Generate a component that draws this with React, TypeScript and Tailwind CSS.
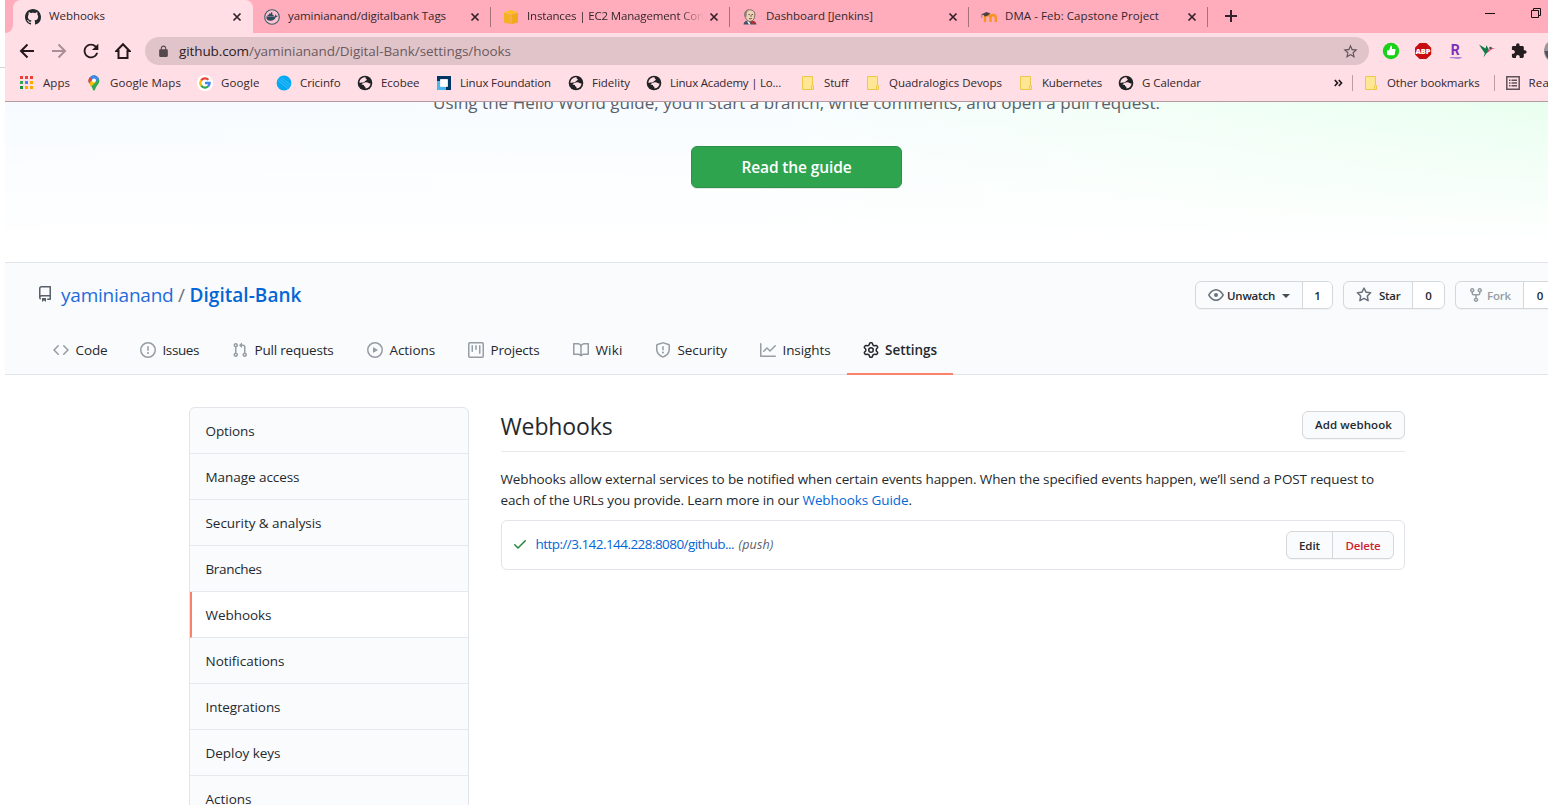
import { useLayoutEffect, useRef, useState, type ReactNode } from "react";

/** Text whose letter spacing is adjusted so that it fills `w` pixels. */
function T({ w, className = "", children }: { w: number; className?: string; children: string }) {
  const ref = useRef<HTMLSpanElement>(null);
  const [ls, setLs] = useState(0);
  useLayoutEffect(() => {
    if (ref.current) {
      const natural = ref.current.getBoundingClientRect().width;
      setLs((w - natural) / children.length);
    }
  }, []);
  return (
    <span ref={ref} className={"inline-block whitespace-pre " + className} style={{ letterSpacing: ls }}>
      {children}
    </span>
  );
}

function Svg({ d, s = 16, vb = "0 0 16 16", className = "" }: { d: string; s?: number; vb?: string; className?: string }) {
  return (
    <svg width={s} height={s} viewBox={vb} fill="currentColor" fillRule="evenodd" className={"shrink-0 " + className}>
      <path d={d} />
    </svg>
  );
}

const P = {
  repo: "M2 2.5A2.5 2.5 0 014.5 0h8.75a.75.75 0 01.75.75v12.5a.75.75 0 01-.75.75h-2.5a.75.75 0 110-1.5h1.75v-2h-8a1 1 0 00-.714 1.7.75.75 0 01-1.072 1.05A2.495 2.495 0 012 11.5v-9zm10.5-1V9h-8c-.356 0-.694.074-1 .208V2.5a1 1 0 011-1h8zM5 12.25v3.25a.25.25 0 00.4.2l1.45-1.087a.25.25 0 01.3 0L8.6 15.7a.25.25 0 00.4-.2v-3.25a.25.25 0 00-.25-.25h-3.5a.25.25 0 00-.25.25z",
  code: "M4.72 3.22a.75.75 0 011.06 1.06L2.06 8l3.72 3.72a.75.75 0 11-1.06 1.06L.47 8.53a.75.75 0 010-1.06l4.25-4.25zm6.56 0a.75.75 0 10-1.06 1.06L13.94 8l-3.72 3.72a.75.75 0 101.06 1.06l4.25-4.25a.75.75 0 000-1.06l-4.25-4.25z",
  issue: "M8 1.5a6.5 6.5 0 100 13 6.5 6.5 0 000-13zM0 8a8 8 0 1116 0A8 8 0 010 8zm9 3a1 1 0 11-2 0 1 1 0 012 0zm-.25-6.25a.75.75 0 00-1.5 0v3.5a.75.75 0 001.5 0v-3.5z",
  pull: "M7.177 3.073L9.573.677A.25.25 0 0110 .854v4.792a.25.25 0 01-.427.177L7.177 3.427a.25.25 0 010-.354zM3.75 2.5a.75.75 0 100 1.5.75.75 0 000-1.5zm-2.25.75a2.25 2.25 0 113 2.122v5.256a2.251 2.251 0 11-1.5 0V5.372A2.25 2.25 0 011.5 3.25zM11 2.5h-1V4h1a1 1 0 011 1v5.628a2.251 2.251 0 101.5 0V5A2.5 2.5 0 0011 2.5zm1 10.25a.75.75 0 111.5 0 .75.75 0 01-1.5 0zM3.75 12a.75.75 0 100 1.5.75.75 0 000-1.5z",
  play: "M1.5 8a6.5 6.5 0 1113 0 6.5 6.5 0 01-13 0zM8 0a8 8 0 100 16A8 8 0 008 0zM6.379 5.227A.25.25 0 006 5.442v5.117a.25.25 0 00.379.214l4.264-2.559a.25.25 0 000-.428L6.379 5.227z",
  project: "M1.75 0A1.75 1.75 0 000 1.75v12.5C0 15.216.784 16 1.75 16h12.5A1.75 1.75 0 0016 14.25V1.75A1.75 1.75 0 0014.25 0H1.75zM1.5 1.75a.25.25 0 01.25-.25h12.5a.25.25 0 01.25.25v12.5a.25.25 0 01-.25.25H1.75a.25.25 0 01-.25-.25V1.75zM11.75 3a.75.75 0 00-.75.75v7.5a.75.75 0 001.5 0v-7.5a.75.75 0 00-.75-.75zm-8.25.75a.75.75 0 011.5 0v5.5a.75.75 0 01-1.5 0v-5.5zM8 3a.75.75 0 00-.75.75v3.5a.75.75 0 001.5 0v-3.5A.75.75 0 008 3z",
  book: "M0 1.75A.75.75 0 01.75 1h4.253c1.227 0 2.317.59 3 1.501A3.744 3.744 0 0111.006 1h4.245a.75.75 0 01.75.75v10.5a.75.75 0 01-.75.75h-4.507a2.25 2.25 0 00-1.591.659l-.622.621a.75.75 0 01-1.06 0l-.622-.621A2.25 2.25 0 005.258 13H.75a.75.75 0 01-.75-.75V1.75zm8.755 3a2.25 2.25 0 012.25-2.25H14.5v9h-3.757c-.71 0-1.4.201-1.992.572l.004-7.322zm-1.504 7.324l.004-5.073-.002-2.253A2.25 2.25 0 005.003 2.5H1.5v9h3.757a3.75 3.75 0 011.994.574z",
  shield: "M7.467.133a1.75 1.75 0 011.066 0l5.25 1.68A1.75 1.75 0 0115 3.48V7c0 1.566-.32 3.182-1.303 4.682-.983 1.498-2.585 2.813-5.032 3.855a1.7 1.7 0 01-1.33 0c-2.447-1.042-4.049-2.357-5.032-3.855C1.32 10.182 1 8.566 1 7V3.48a1.75 1.75 0 011.217-1.667l5.25-1.68zm.61 1.429a.25.25 0 00-.153 0l-5.25 1.68a.25.25 0 00-.174.238V7c0 1.358.275 2.666 1.057 3.86.784 1.194 2.121 2.34 4.366 3.297a.2.2 0 00.154 0c2.245-.956 3.582-2.104 4.366-3.298C13.225 9.666 13.5 8.36 13.5 7V3.48a.25.25 0 00-.174-.237l-5.25-1.68zM9 10.5a1 1 0 11-2 0 1 1 0 012 0zm-.25-5.75a.75.75 0 10-1.5 0v3a.75.75 0 001.5 0v-3z",
  graph: "M1.5 1.75a.75.75 0 00-1.5 0v12.5c0 .414.336.75.75.75h14.5a.75.75 0 000-1.5H1.5V1.75zm14.28 2.53a.75.75 0 00-1.06-1.06L10 7.94 7.53 5.47a.75.75 0 00-1.06 0L3.22 8.72a.75.75 0 001.06 1.06L7 7.06l2.47 2.47a.75.75 0 001.06 0l5.25-5.25z",
  gear: "M7.429 1.525a6.593 6.593 0 011.142 0c.036.003.108.036.137.146l.289 1.105c.147.56.55.967.997 1.189.174.086.341.183.501.29.417.278.97.423 1.53.27l1.102-.303c.11-.03.175.016.195.046.219.31.41.641.573.989.014.031.022.11-.059.19l-.815.806c-.411.406-.562.957-.53 1.456a4.588 4.588 0 010 .582c-.032.499.119 1.05.53 1.456l.815.806c.08.08.073.159.059.19a6.494 6.494 0 01-.573.99c-.02.029-.086.074-.195.045l-1.103-.303c-.559-.153-1.112-.008-1.529.27-.16.107-.327.204-.5.29-.449.222-.851.628-.998 1.189l-.289 1.105c-.029.11-.101.143-.137.146a6.613 6.613 0 01-1.142 0c-.036-.003-.108-.037-.137-.146l-.289-1.105c-.147-.56-.55-.967-.997-1.189a4.502 4.502 0 01-.501-.29c-.417-.278-.97-.423-1.53-.27l-1.102.303c-.11.03-.175-.016-.195-.046a6.492 6.492 0 01-.573-.989c-.014-.031-.022-.11.059-.19l.815-.806c.411-.406.562-.957.53-1.456a4.587 4.587 0 010-.582c.032-.499-.119-1.05-.53-1.456l-.815-.806c-.08-.08-.073-.159-.059-.19a6.44 6.44 0 01.573-.99c.02-.029.086-.075.195-.045l1.103.303c.559.153 1.112.008 1.529-.27.16-.107.327-.204.5-.29.449-.222.851-.628.998-1.189l.289-1.105c.029-.11.101-.143.137-.146zM8 0c-.236 0-.47.01-.701.03-.743.065-1.29.615-1.458 1.261l-.29 1.106c-.017.066-.078.158-.211.224a5.994 5.994 0 00-.668.386c-.123.082-.233.09-.3.071L3.27 2.776c-.644-.177-1.392.02-1.82.63a7.977 7.977 0 00-.704 1.217c-.315.675-.111 1.422.363 1.891l.815.806c.05.048.098.147.088.294a6.084 6.084 0 000 .772c.01.147-.038.246-.088.294l-.815.806c-.474.469-.678 1.216-.363 1.891.2.428.436.835.704 1.218.428.609 1.176.806 1.82.63l1.103-.303c.066-.019.176-.011.299.071.213.143.436.272.668.386.133.066.194.158.212.224l.289 1.106c.169.646.715 1.196 1.458 1.26a8.094 8.094 0 001.402 0c.743-.064 1.29-.614 1.458-1.26l.29-1.106c.017-.066.078-.158.211-.224a5.98 5.98 0 00.668-.386c.123-.082.233-.09.3-.071l1.102.302c.644.177 1.392-.02 1.82-.63.268-.382.505-.789.704-1.217.315-.675.111-1.422-.364-1.891l-.814-.806c-.05-.048-.098-.147-.088-.294a6.1 6.1 0 000-.772c-.01-.147.039-.246.088-.294l.814-.806c.475-.469.679-1.216.364-1.891a7.992 7.992 0 00-.704-1.218c-.428-.609-1.176-.806-1.82-.63l-1.103.303c-.066.019-.176.011-.299-.071a5.991 5.991 0 00-.668-.386c-.133-.066-.194-.158-.212-.224L10.16 1.29C9.99.645 9.444.095 8.701.031A8.094 8.094 0 008 0zm1.5 8a1.5 1.5 0 11-3 0 1.5 1.5 0 013 0zM11 8a3 3 0 11-6 0 3 3 0 016 0z",
  eye: "M1.679 7.932c.412-.621 1.242-1.75 2.366-2.717C5.175 4.242 6.527 3.5 8 3.5c1.473 0 2.824.742 3.955 1.715 1.124.967 1.954 2.096 2.366 2.717a.119.119 0 010 .136c-.412.621-1.242 1.75-2.366 2.717C10.825 11.758 9.473 12.5 8 12.5c-1.473 0-2.824-.742-3.955-1.715C2.92 9.818 2.09 8.69 1.679 8.068a.119.119 0 010-.136zM8 2c-1.981 0-3.67.992-4.933 2.078C1.797 5.169.88 6.423.43 7.1a1.619 1.619 0 000 1.798c.45.678 1.367 1.932 2.637 3.024C4.329 13.008 6.019 14 8 14c1.981 0 3.67-.992 4.933-2.078 1.27-1.091 2.187-2.345 2.637-3.023a1.619 1.619 0 000-1.798c-.45-.678-1.367-1.932-2.637-3.023C11.671 2.992 9.981 2 8 2zm0 8a2 2 0 100-4 2 2 0 000 4z",
  star: "M8 .25a.75.75 0 01.673.418l1.882 3.815 4.21.612a.75.75 0 01.416 1.279l-3.046 2.97.719 4.192a.75.75 0 01-1.088.791L8 12.347l-3.766 1.98a.75.75 0 01-1.088-.79l.72-4.194L.818 6.374a.75.75 0 01.416-1.28l4.21-.611L7.327.668A.75.75 0 018 .25zm0 2.445L6.615 5.5a.75.75 0 01-.564.41l-3.097.45 2.24 2.184a.75.75 0 01.216.664l-.528 3.084 2.769-1.456a.75.75 0 01.698 0l2.77 1.456-.53-3.084a.75.75 0 01.216-.664l2.24-2.183-3.096-.45a.75.75 0 01-.564-.41L8 2.694v.001z",
  fork: "M5 3.25a.75.75 0 11-1.5 0 .75.75 0 011.5 0zm0 2.122a2.25 2.25 0 10-1.5 0v.878A2.25 2.25 0 005.75 8.5h1.5v2.128a2.251 2.251 0 101.5 0V8.5h1.5a2.25 2.25 0 002.25-2.25v-.878a2.25 2.25 0 10-1.5 0v.878a.75.75 0 01-.75.75h-4.5A.75.75 0 015 6.25v-.878zm3.75 7.378a.75.75 0 11-1.5 0 .75.75 0 011.5 0zm3-8.75a.75.75 0 100-1.5.75.75 0 000 1.5z",
  check: "M13.78 4.22a.75.75 0 010 1.06l-7.25 7.25a.75.75 0 01-1.06 0L2.22 9.28a.75.75 0 011.06-1.06L6 10.94l6.72-6.72a.75.75 0 011.06 0z",
  github: "M8 0C3.58 0 0 3.58 0 8c0 3.54 2.29 6.53 5.47 7.59.4.07.55-.17.55-.38 0-.19-.01-.82-.01-1.49-2.01.37-2.53-.49-2.69-.94-.09-.23-.48-.94-.82-1.13-.28-.15-.68-.52-.01-.53.63-.01 1.08.58 1.23.82.72 1.21 1.87.87 2.33.66.07-.52.28-.87.51-1.07-1.78-.2-3.64-.89-3.64-3.95 0-.87.31-1.59.82-2.15-.08-.2-.36-1.02.08-2.12 0 0 .67-.21 2.2.82.64-.18 1.32-.27 2-.27.68 0 1.36.09 2 .27 1.53-1.04 2.2-.82 2.2-.82.44 1.1.16 1.92.08 2.12.51.56.82 1.27.82 2.15 0 3.07-1.87 3.75-3.65 3.95.29.25.54.73.54 1.48 0 1.07-.01 1.93-.01 2.2 0 .21.15.46.55.38A8.013 8.013 0 0016 8c0-4.42-3.58-8-8-8z",
  reload: "M17.65 6.35A7.958 7.958 0 0012 4c-4.42 0-7.99 3.58-7.99 8s3.57 8 7.99 8c3.73 0 6.84-2.55 7.73-6h-2.08A5.99 5.99 0 0112 18c-3.31 0-6-2.69-6-6s2.69-6 6-6c1.66 0 3.14.69 4.22 1.78L13 11h7V4l-2.35 2.35z",
  puzzle: "M20.5 11H19V7c0-1.1-.9-2-2-2h-4V3.5a2.5 2.5 0 00-5 0V5H4c-1.1 0-1.99.9-1.99 2v3.8H3.5c1.49 0 2.7 1.21 2.7 2.7s-1.21 2.7-2.7 2.7H2V20c0 1.1.9 2 2 2h3.8v-1.5c0-1.49 1.21-2.7 2.7-2.7s2.7 1.21 2.7 2.7V22H17c1.1 0 2-.9 2-2v-4h1.5a2.5 2.5 0 000-5z",
  lock: "M18 8h-1V6c0-2.76-2.24-5-5-5S7 3.24 7 6v2H6c-1.1 0-2 .9-2 2v10c0 1.1.9 2 2 2h12c1.1 0 2-.9 2-2V10c0-1.1-.9-2-2-2zM9 6c0-1.66 1.34-3 3-3s3 1.34 3 3v2H9V6z",
  starLine: "M22 9.24l-7.19-.62L12 2 9.19 8.63 2 9.24l5.46 4.73L5.82 21 12 17.27 18.18 21l-1.63-7.03L22 9.24zM12 15.4l-3.76 2.27 1-4.28-3.32-2.88 4.38-.38L12 6.1l1.71 4.04 4.38.38-3.32 2.88 1 4.28L12 15.4z",
};

const Docker = () => (
  <svg width="16" height="16" viewBox="0 0 16 16" className="shrink-0">
    <circle cx="8" cy="8" r="7.3" fill="#ffc3cd" stroke="#3c5a70" strokeWidth="1.1" />
    <path d="M2.3 7.4h8.6c.5-.8.4-1.6.1-2.2.9.3 1.1.9 1.2 1.5.6-.1 1.2 0 1.6.3-.4.8-1.1 1.1-1.9 1-1 2.600-2.800 3.800-5.500 3.800-2.600 0-4.200-1.500-4.100-4.400z" fill="#2c4a60" />
    <path d="M3.600 5.800h6v1.500h-6zM5.100 4.500h3.200v1.200H5.100zM7 3.200h1.300v1.200H7z" fill="#2c4a60" />
  </svg>
);
const Cube = () => (
  <svg width="16" height="16" viewBox="0 0 16 16" className="shrink-0">
    <path d="M1 3.200 8 1l7 2.200L8 5z" fill="#fbc01e" />
    <path d="M1 3.800l6.700 1.500V15.200L1 13.500z" fill="#f5b120" />
    <path d="M15 3.800 8.300 5.300V15.200L15 13.500z" fill="#f2a81c" />
  </svg>
);
const Jenkins = () => (
  <svg width="16" height="16" viewBox="0 0 16 16" className="shrink-0">
    <path d="M1.500 15.500c0-2.500 2-3.500 4-4l5 .2c2 .3 3.500 1.300 4 3.800z" fill="#40525f" />
    <path d="M2.700 6C2.500 2.500 4.500.8 7.600.8c3.400 0 5.500 1.800 5.200 5.400-.1 3.400-1.900 6-4.300 6.200C5.800 12.600 3.200 10 2.700 6z" fill="#eed0b4" stroke="#5c514b" strokeWidth=".8" />
    <path d="M2.600 6.500C2 3 4.500.7 7 .8 5 2 4.500 4 4.600 7l-.8 2z" fill="#8a8178" />
    <path d="M6.400 5.500h1.400M9.600 5.500H11M7 9.400c1 .6 2.200.5 3-.2M9 6v1.800" stroke="#3c3532" strokeWidth=".8" fill="none" />
    <path d="M8 13.300 11 12v3zm6 0L11 12.500v2.200z" fill="#d3262f" />
    <path d="M5 12.500l2 3h1.500L7 12.500z" fill="#fff" />
  </svg>
);
const Moodle = () => (
  <svg width="16" height="16" viewBox="0 0 16 16" className="shrink-0">
    <path d="M4 13V9c0-2 1-3 2.700-3S9.500 7 9.500 9v4M9.500 9c0-2 1-3 2.600-3s2.700 1 2.700 3v4" fill="none" stroke="#f7931e" strokeWidth="2.300" />
    <path d="M0 5.600 5.500 3 9.500 4.600 6 7 3.500 7.500 3 6.200z" fill="#4a4341" />
    <path d="M.8 5.500v3.500" stroke="#8a6a5c" strokeWidth=".7" />
  </svg>
);
const Close = () => (
  <svg width="16" height="16" viewBox="0 0 16 16" className="shrink-0">
    <path d="M4.500 4.500l7 7M11.500 4.500l-7 7" stroke="#33222a" strokeWidth="1.700" />
  </svg>
);

const Apps = () => (
  <svg width="16" height="16" viewBox="0 0 16 16" className="shrink-0">
    {["#ea4335", "#ea4335", "#ea4335", "#34a853", "#4285f4", "#f9ab00", "#1e8e3e", "#f9ab00", "#f9ab00"].map((c, i) => (
      <rect key={i} x={1 + (i % 3) * 5} y={1 + Math.floor(i / 3) * 5} width="3" height="3" fill={c} />
    ))}
  </svg>
);
const Maps = () => (
  <svg width="16" height="16" viewBox="0 0 16 16" className="shrink-0">
    <path d="M8 .3A5.400 5.400 0 0 0 2.600 5.700c0 3.300 3 4.600 4.200 8.600.3 1 .7 1.400 1.200 1.400s.9-.4 1.200-1.400c1.200-4 4.200-5.300 4.200-8.600A5.400 5.400 0 0 0 8 .3z" fill="#34a853" />
    <path d="M3.200 8.300 10 .7A5.400 5.400 0 0 0 2.600 5.700c0 1 .2 1.800.6 2.600z" fill="#4285f4" />
    <path d="M3.800 2.300 6.200 4.400 4 7.600l-.7.800A5 5 0 0 1 3.800 2.300z" fill="#ea4335" />
    <path d="M3.200 8.300 6.500 4.600l3 2.800-4.300 4C4.400 10.200 3.600 9.400 3.200 8.300z" fill="#fbbc04" />
    <path d="M10 .7 13 3.500 9.500 7.300 6.500 4.500z" fill="#4285f4" />
    <circle cx="8" cy="5.600" r="2" fill="#fff" />
  </svg>
);
const Google = () => (
  <svg width="16" height="16" viewBox="0 0 16 16" className="shrink-0">
    <circle cx="8" cy="8" r="8" fill="#fff" />
    <g fill="none" strokeWidth="2.300">
      <path d="M4.100 5.500A4.600 4.600 0 0 1 11.400 4.800" stroke="#ea4335" />
      <path d="M4.100 10.500a4.700 4.700 0 0 1 0-5" stroke="#fbbc05" />
      <path d="M11.200 11.300A4.600 4.600 0 0 1 4.100 10.500" stroke="#34a853" />
      <path d="M8 8h4.600a4.600 4.600 0 0 1-1.400 3.300" stroke="#4285f4" />
    </g>
  </svg>
);
const Cric = () => (
  <svg width="16" height="16" viewBox="0 0 16 16" className="shrink-0">
    <circle cx="8" cy="8" r="7.400" fill="#03a9f4" />
    <path d="M2 5.500l10 8M3.500 4l9.800 7.800M5.500 2.800l8.800 7" stroke="#63caf7" strokeWidth=".6" />
  </svg>
);
const Globe = () => (
  <svg width="16" height="16" viewBox="0 0 16 16" className="shrink-0">
    <circle cx="8" cy="8" r="7.300" fill="#202124" />
    <path d="M8.700 2.300c-.3.900 0 1.400.7 1.700.7.400.5 1.300-.4 1.500-1.200.3-1.300 1.700-2.600 1.900-1.300.1-2.600 0-3.900.6C2.300 4.700 5 2.100 8.700 2.300z" fill="#ffdfe5" />
    <path d="M8 7.500c1.500-.3 2.700-.2 3.500.6.600.5 1.200.5 2.100.3-.3 2.600-2.200 4.800-5 5.200l-.3-1.800c-1.200-.3-1.400-1-1.300-1.800-.9 0-1.800-.1-2.500-.4C5.200 8.400 6.600 7.700 8 7.500z" fill="#ffdfe5" />
  </svg>
);
const LinuxF = () => (
  <svg width="16" height="16" viewBox="0 0 16 16" className="shrink-0">
    <path d="M1 1h14v14h-5v-3.300h1.700V4.300H4.300V6H1z" fill="#003764" />
    <path d="M1 6h3.300v5.700H10V15H1z" fill="#4cb4ee" />
    <path d="M4.300 4.300h7.400v7.400H4.300z" fill="#fff" />
  </svg>
);
const Folder = () => (
  <svg width="16" height="16" viewBox="0 0 16 16" className="shrink-0">
    <path d="M2.500 1.500h10v9h1v4h-11z" fill="#ffe695" stroke="#ecc94b" />
    <path d="M11.500 10.500v4" stroke="#ecc94b" />
  </svg>
);

const tabs = [
  { icon: <Svg d={P.github} className="text-[#24292e]" />, t: "Webhooks", w: 56, sep: false },
  { icon: <Docker />, t: "yaminianand/digitalbank Tags", w: 158, sep: true },
  { icon: <Cube />, t: "Instances | EC2 Management Con", w: 177, sep: true },
  { icon: <Jenkins />, t: "Dashboard [Jenkins]", w: 107, sep: true },
  { icon: <Moodle />, t: "DMA - Feb: Capstone Project", w: 154, sep: true },
];

const marks = [
  { icon: <Apps />, t: "Apps", w: 27, c: "w-[67px]" },
  { icon: <Maps />, t: "Google Maps", w: 71, c: "w-[111px]" },
  { icon: <Google />, t: "Google", w: 38.500, c: "w-[79px]" },
  { icon: <Cric />, t: "Cricinfo", w: 40.500, c: "w-[81px]" },
  { icon: <Globe />, t: "Ecobee", w: 38.500, c: "w-[79px]" },
  { icon: <LinuxF />, t: "Linux Foundation", w: 91, c: "w-[132px]" },
  { icon: <Globe />, t: "Fidelity", w: 38, c: "w-[78px]" },
  { icon: <Globe />, t: "Linux Academy | Lo...", w: 111, c: "w-[154px]" },
  { icon: <Folder />, t: "Stuff", w: 24.500, c: "w-[65px]" },
  { icon: <Folder />, t: "Quadralogics Devops", w: 113, c: "w-[153px]" },
  { icon: <Folder />, t: "Kubernetes", w: 60, c: "w-[100px]" },
  { icon: <Globe />, t: "G Calendar", w: 59, c: "w-[212px]" },
];

const nav = [
  { d: P.code, t: "Code", w: 32, c: "w-[87px]" },
  { d: P.issue, t: "Issues", w: 36.500, c: "w-[92px]" },
  { d: P.pull, t: "Pull requests", w: 79, c: "w-[135px]" },
  { d: P.play, t: "Actions", w: 45.500, c: "w-[101px]" },
  { d: P.project, t: "Projects", w: 49, c: "w-[105px]" },
  { d: P.book, t: "Wiki", w: 27, c: "w-[82px]" },
  { d: P.shield, t: "Security", w: 49.500, c: "w-[105px]" },
  { d: P.graph, t: "Insights", w: 48, c: "w-[87px]" },
];

const side: [string, number][] = [
  ["Options", 49], ["Manage access", 94], ["Security & analysis", 116], ["Branches", 56], ["Webhooks", 66],
  ["Notifications", 79], ["Integrations", 75], ["Deploy keys", 75], ["Actions", 46],
];

function Btn({ className = "", children }: { className?: string; children: ReactNode }) {
  return (
    <div className={"flex h-[28px] shrink-0 overflow-hidden rounded-[6px] border border-[#d5d8da] bg-[#fafbfc] text-[11.5px] font-semibold text-[#24292e] shadow-[0_1px_0_rgba(27,31,35,0.04)] " + className}>
      {children}
    </div>
  );
}

function Chrome() {
  return (
    <header className="h-[102px] shrink-0 border-b border-[#b49aa1] bg-[#ffdfe5] text-[11.5px] text-[#33262b]">
      <div className="flex h-[33px] bg-[#ffadbc]">
        <div className="w-2 shrink-0 bg-[#ffdfe5]"><div className="h-full rounded-br-[8px] bg-[#ffadbc]" /></div>
        {tabs.map((t, i) => (
          <div key={t.t} className={i === 0 ? "flex h-full w-[240px] shrink-0 items-center rounded-t-[8px] bg-[#ffdfe5] pl-3" : i === 1 ? "flex h-full w-[238px] shrink-0 items-center rounded-bl-[8px] pl-[11px]" : "flex h-full w-[239px] shrink-0 items-center pl-3"}>
            {t.icon}
            <div className={i === 2 ? "ml-2 w-[178px] overflow-hidden pb-[2px] [mask-image:linear-gradient(to_right,black_152px,transparent_177px)]" : "ml-2 w-[178px] overflow-hidden pb-[2px]"}>
              <T w={t.w}>{t.t}</T>
            </div>
            <div className={i === 0 ? "ml-[2px] flex" : "ml-[3px] flex"}><Close /></div>
            {t.sep && <div className="ml-[7px] h-5 w-px bg-[#a3727c]" />}
          </div>
        ))}
        <svg width="16" height="16" viewBox="0 0 16 16" className="ml-[15px] mt-2 shrink-0">
          <path d="M8 2v12M2 8h12" stroke="#33222a" strokeWidth="2" />
        </svg>
        <svg width="60" height="14" viewBox="0 0 60 14" className="ml-[245px] mt-[6px] shrink-0" fill="none" stroke="#1a1013">
          <path d="M1 7.500h10M47.500 4.500h7v7h-7zM49.500 4.500v-2h7v7h-2" />
        </svg>
      </div>
      <div className="flex h-9 items-center pl-[14px]">
        <svg width="16" height="16" viewBox="0 0 16 16" className="mr-4 shrink-0" fill="none" stroke="#24181c" strokeWidth="2"><path d="M15 8H2.500M8.500 1.500 2 8l6.500 6.500" /></svg>
        <svg width="16" height="16" viewBox="0 0 16 16" className="mr-[13px] shrink-0" fill="none" stroke="#a88f96" strokeWidth="2"><path d="M1 8h12.500M7.500 1.500 14 8l-6.500 6.500" /></svg>
        <Svg d={P.reload} vb="0 0 24 24" s={22} className="mr-[13px] text-[#24181c]" />
        <svg width="16" height="18" viewBox="0 0 16 18" className="shrink-0" fill="none" stroke="#24181c" strokeWidth="2"><path d="M8 2.200 1.500 9H3.500v7h9V9h2z" /></svg>
        <div className="ml-[14px] flex h-7 w-[1224px] shrink-0 items-center rounded-full bg-[#e1c4ca] pl-3 text-[13.500px]">
          <Svg d={P.lock} vb="0 0 24 24" s={13} className="text-[#55484d]" />
          <T w={70} className="ml-[9px] text-[#2b2024]">github.com</T>
          <T w={262} className="text-[#6a5a60]">/yaminianand/Digital-Bank/settings/hooks</T>
          <Svg d={P.starLine} vb="0 0 24 24" s={17} className="ml-auto mr-[10px] text-[#5f5358]" />
        </div>
        <svg width="184" height="24" viewBox="0 0 184 24" className="ml-[13px] shrink-0">
          <circle cx="9" cy="12" r="8.200" fill="#19d119" />
          <path d="M5 11.300h2.200L8.800 6.600c1.300 0 1.500 1 1.100 3.400h3c.5 0 .7.500.6 1l-.8 4.500c-.1.500-.4.700-.9.700H6.700L5 15.700z" fill="#fff" />
          <path d="M37.600 4h6.800l4.800 4.800v6.600L44.400 20h-6.800L33 15.400V8.800z" fill="#c70d10" />
          <text x="41" y="15" textAnchor="middle" fontSize="7.500" fontWeight="800" fill="#fff" fontFamily="Open Sans, sans-serif">ABP</text>
          <text x="73.300" y="16" textAnchor="middle" fontSize="14" fontWeight="700" fill="#7b2fb8" fontFamily="Roboto, sans-serif">R</text>
          <path d="M68 18.600h11.500l-3 1z" fill="#9a6cd0" stroke="#9a6cd0" strokeWidth=".6" />
          <path d="M97 5.500 103.500 9.500 104.500 6.300 106.500 10 107.500 12 104.500 14.200 101.500 18.500 102.800 14.200 99.500 9.500z" fill="#157a4a" />
          <path d="M105.500 12l4-3.200 3.500.6-3 .8-4 3z" fill="#ee5a88" />
          <circle cx="108.500" cy="9" r="1.300" fill="#3a5a4a" />
          <circle cx="174" cy="12" r="12" fill="#9a969a" />
          <path d="M162.500 12c1 5 3 8 7 11l2-11z" fill="#54505e" />
          <g transform="translate(128.500 3.500) scale(.7)" fill="#241c1f"><path d={P.puzzle} /></g>
        </svg>
      </div>
      <div className="flex h-7 items-center pl-[14px]">
        {marks.map((m, i) => (
          <div key={i} className={"flex shrink-0 items-center " + m.c}>
            {m.icon}
            <T w={m.w} className="ml-2">{m.t}</T>
          </div>
        ))}
        <svg width="9" height="8" viewBox="0 0 9 8" className="ml-[4px] shrink-0" fill="none" stroke="#24181c" strokeWidth="1.700"><path d="M.8 1l2.700 3L.8 7M4.800 1l2.700 3-2.700 3" /></svg>
        <div className="ml-[9px] mr-[10px] h-4 w-px shrink-0 bg-[#bf9ca5]" />
        <Folder />
        <T w={92.500} className="ml-2 shrink-0">Other bookmarks</T>
        <div className="ml-[14px] mr-[11px] h-4 w-px shrink-0 bg-[#bf9ca5]" />
        <svg width="14" height="14" viewBox="0 0 14 14" className="shrink-0" fill="none" stroke="#5f5358" strokeWidth="1.500"><path d="M.8.8h12.400v12.400H.8zM3 4.200h1.500M5.500 4.200H11M3 7h1.500M5.500 7H11M3 9.800h1.500M5.500 9.800H11" /></svg>
        <T w={64} className="ml-[9px] shrink-0">Reading list</T>
      </div>
    </header>
  );
}

export default function App() {
  return (
    <div className="flex h-[805px] w-[1548px] overflow-hidden bg-white font-['Open_Sans','Noto_Sans',sans-serif] text-[13.500px] text-[#24292e]">
      <div className="w-[5px] shrink-0 pt-[67px]"><div className="h-px bg-[#d4d4d4]" /></div>
      <div className="flex w-[1543px] shrink-0 flex-col overflow-hidden">
        <Chrome />
        <section className="h-[160px] w-[1583px] shrink-0 overflow-hidden bg-[linear-gradient(to_bottom,transparent,white_90%),linear-gradient(78deg,#f7fbff_0%,#f8fcff_48%,#f2fff7_74%,#e8ffef_100%)]">
          <div className="mt-[-13px] flex h-[28px] items-center justify-center text-[17px] text-[#586069]">
            <T w={727}>Using the Hello World guide, you’ll start a branch, write comments, and open a pull request.</T>
          </div>
          <div className="mx-auto mt-[29px] flex h-[42px] w-[211px] items-center justify-center rounded-[6px] border border-[#2a9147] bg-[#2ea44f] pt-[2px] text-[15.500px] font-semibold text-white shadow-[0_1px_0_rgba(27,31,35,0.1)]">
            <T w={110}>Read the guide</T>
          </div>
        </section>
        <section className="h-[113px] w-[1583px] shrink-0 border-y border-[#e1e4e8] bg-[#fafbfc]">
          <div className="flex h-[64px] items-center pl-[32px]">
            <Svg d={P.repo} className="mt-[-2px] text-[#586069]" />
            <div className="ml-2 flex w-[1134px] shrink-0 items-center text-[19px] text-[#0366d6]">
              <T w={112.500} className="text-[#1f6bdc]">yaminianand</T>
              <span className="mx-1 w-2 text-center text-[#6a737d]">/</span>
              <T w={112} className="font-semibold">Digital-Bank</T>
            </div>
            <Btn className="mr-[10px] w-[138px]">
              <div className="flex w-[107px] items-center border-r border-[#d5d8da] pl-3">
                <Svg d={P.eye} className="text-[#6a737d]" />
                <T w={48} className="ml-[3px] pt-px">Unwatch</T>
                <div className="ml-[7px] mt-[2px] h-0 w-0 border-x-4 border-t-4 border-x-transparent border-t-[#444d56]" />
              </div>
              <div className="flex flex-1 items-center justify-center bg-white pt-px">1</div>
            </Btn>
            <Btn className="mr-[10px] w-[102px]">
              <div className="flex w-[69px] items-center border-r border-[#d5d8da] pl-3">
                <Svg d={P.star} className="text-[#6a737d]" />
                <T w={21.500} className="ml-[7px] pt-px">Star</T>
              </div>
              <div className="flex flex-1 items-center justify-center bg-white pt-px">0</div>
            </Btn>
            <Btn className="w-[102px]">
              <div className="flex w-[68px] items-center border-r border-[#d5d8da] pl-3 text-[#959da5]">
                <Svg d={P.fork} />
                <T w={24} className="ml-[3px] pt-px">Fork</T>
              </div>
              <div className="flex flex-1 items-center justify-center bg-white pt-px">0</div>
            </Btn>
          </div>
          <div className="flex h-[48px] pl-12">
            {nav.map((n) => (
              <div key={n.t} className={"flex h-[46px] shrink-0 items-center " + n.c}>
                <Svg d={n.d} className="text-[#959da5]" />
                <T w={n.w} className="ml-[6.500px]">{n.t}</T>
              </div>
            ))}
            <div className="flex h-[48px] w-[106px] shrink-0 items-center border-b-2 border-[#f9826c] pl-4">
              <Svg d={P.gear} />
              <T w={52} className="ml-[6px] font-semibold">Settings</T>
            </div>
          </div>
        </section>
        <main className="flex gap-8 pl-[184px] pt-8">
          <nav className="w-[280px] shrink-0 rounded-t-[6px] border border-[#e1e4e8] bg-[#fafbfc]">
            {side.map(([t, w], i) => (
              <div key={t} className={i === 4 ? "flex h-[46px] items-center border-b border-l-2 border-b-[#e6e9ec] border-l-[#f9826c] bg-white pl-[13.500px] pt-[2px]" : "flex h-[46px] items-center border-b border-[#e6e9ec] pl-[15.500px] pt-[2px]"}>
                <T w={w}>{t}</T>
              </div>
            ))}
          </nav>
          <div className="w-[904px] shrink-0">
            <div className="flex h-[45px] items-center justify-between border-b border-[#e6e9ec]">
              <T w={112} className="ml-[-0.500px] mt-[-5px] text-[23px]">Webhooks</T>
              <Btn className="mt-[-9px] w-[103px] items-center justify-center pt-px"><T w={77}>Add webhook</T></Btn>
            </div>
            <div className="ml-[-0.500px] mt-[17px] leading-[21px]">
              <div><T w={873.500}>Webhooks allow external services to be notified when certain events happen. When the specified events happen, we’ll send a POST request to</T></div>
              <div className="flex">
                <T w={302}>{"each of the URLs you provide. Learn more in our "}</T>
                <T w={106} className="text-[#0366d6]">Webhooks Guide</T>.
              </div>
            </div>
            <div className="mt-[9px] flex h-[50px] items-center rounded-[6px] border border-[#e1e4e8] pl-[10px] pr-[10px]">
              <Svg d={P.check} className="mt-[-2px] text-[#22863a]" />
              <T w={198.500} className="ml-[7.500px] mt-[-2px] text-[#0366d6]">http://3.142.144.228:8080/github...</T>
              <T w={35} className="ml-[4.500px] mt-px text-[12.500px] italic text-[#586069]">(push)</T>
              <Btn className="ml-auto w-[108px]">
                <div className="flex w-[46px] items-center justify-center border-r border-[#d5d8da] pt-px"><T w={21}>Edit</T></div>
                <div className="flex flex-1 items-center justify-center pt-px text-[#cb2431]"><T w={35}>Delete</T></div>
              </Btn>
            </div>
          </div>
        </main>
      </div>
    </div>
  );
}
